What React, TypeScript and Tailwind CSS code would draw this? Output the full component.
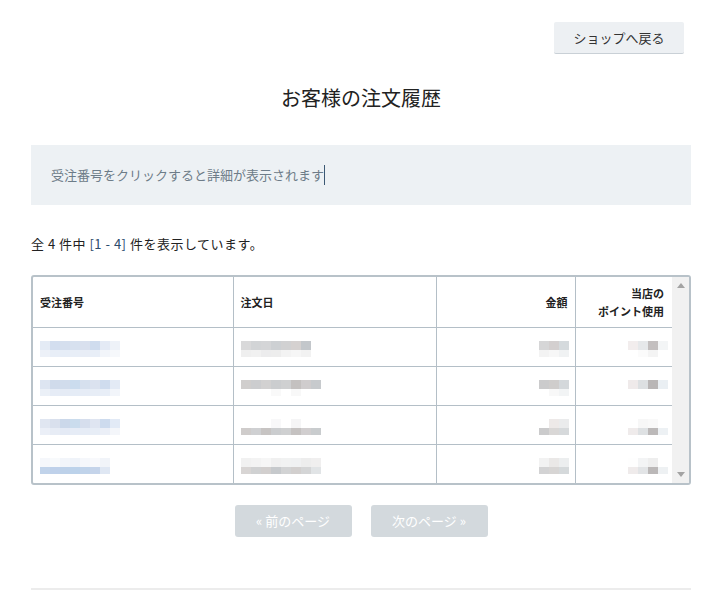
const font = { fontFamily: '"Noto Sans CJK JP", "Noto Sans", sans-serif' };

type Mosaic = { top: string[]; bottom: string[] };

const rows: { id: Mosaic; date: Mosaic; amount: Mosaic; point: Mosaic }[] = [
  {
    id: {
      top: ["#e4ebf5", "#d3deef", "#d5dfee", "#d7e1ef", "#d9e0ee", "#cfdcee", "#e4eaf5", "#eef2f8"],
      bottom: ["#edf1f8", "#e8eef7", "#e6edf7", "#e8eef7", "#e8edf6", "#e8eef7", "#f2f5fa", "#f6f8fb"],
    },
    date: {
      top: ["#d9d9da", "#d2d4d6", "#d4d5d7", "#cdd0d3", "#d1d1d2", "#d5d1d0", "#c3c7cb", "#ffffff"],
      bottom: ["#efefef", "#f1f1f1", "#ececed", "#ededed", "#f3f3f3", "#f6f6f6", "#f2f2f2", "#ffffff"],
    },
    amount: { top: ["#d6d6d7", "#d3cfcf", "#d5dadd"], bottom: ["#f3f3f3", "#f7f7f7", "#f0f2f3"] },
    point: { top: ["#f2eded", "#e6e8ea", "#c3bfbf", "#f3f5f6"], bottom: ["#ffffff", "#fbfbfb", "#f4f4f4", "#ffffff"] },
  },
  {
    id: {
      top: ["#dde5f1", "#d0dbeb", "#d1dcec", "#cbdcee", "#d6e0ee", "#dbe2ef", "#cfdcee", "#e3eaf5"],
      bottom: ["#ebf0f7", "#e6ecf6", "#e5ebf5", "#e5ecf6", "#e6ecf6", "#e7edf6", "#e8eef7", "#f2f5fa"],
    },
    date: {
      top: ["#d0cecd", "#cccdcf", "#d2d1d1", "#cbcdcf", "#cfd0d1", "#c4c1c0", "#cfcccd", "#c7cacd"],
      bottom: ["#ffffff", "#ffffff", "#ffffff", "#f9f9f9", "#ffffff", "#f8f8f8", "#ffffff", "#ffffff"],
    },
    amount: { top: ["#cbcbcc", "#cfcdcc", "#d4d8db"], bottom: ["#ffffff", "#f8f8f8", "#f2f4f5"] },
    point: { top: ["#efeaea", "#dde0e2", "#b9b6b6", "#eaeff3"], bottom: ["#ffffff", "#ffffff", "#ffffff", "#ffffff"] },
  },
  {
    id: {
      top: ["#e0e6f1", "#d9e0ed", "#cbd8ea", "#cadced", "#d6deed", "#dfe5f1", "#cddbee", "#e2eaf6"],
      bottom: ["#ebeff7", "#e7ecf5", "#e4eaf5", "#e6ecf6", "#e6ecf6", "#e7edf6", "#ebeff7", "#f4f6fa"],
    },
    date: {
      top: ["#ffffff", "#ffffff", "#ffffff", "#f8f8f9", "#ffffff", "#f5f5f6", "#ffffff", "#ffffff"],
      bottom: ["#cfcccb", "#cfd0d2", "#c7c4c3", "#cbcdcf", "#cfd0d1", "#c5c2c1", "#d1cecf", "#c9ccce"],
    },
    amount: { top: ["#ffffff", "#ede9e8", "#eaebec"], bottom: ["#cbcbcc", "#d9d7d6", "#d6d9db"] },
    point: { top: ["#ffffff", "#f7f7f7", "#f9f9f9", "#ffffff"], bottom: ["#efebeb", "#dee1e3", "#bcb9b9", "#edf1f4"] },
  },
  {
    id: {
      top: ["#f5f7fb", "#f8fafc", "#f2f5fa", "#eff3f9", "#f5f7fb", "#f8f9fc", "#f1f4f9", "#ffffff"],
      bottom: ["#c1d3ea", "#bfd1ea", "#bdd1e9", "#bcd2ea", "#c0d3ea", "#c5d4ea", "#dfe7f3", "#ffffff"],
    },
    date: {
      top: ["#f1f1f1", "#f3f3f3", "#f6f6f6", "#f0f0f0", "#f1f2f2", "#f0f1f2", "#ededed", "#f0efef"],
      bottom: ["#d8d5d4", "#d0d1d2", "#d2cfce", "#c6c9cc", "#d2d3d4", "#d2cfce", "#d4d5d6", "#e1e4e6"],
    },
    amount: { top: ["#f2f2f2", "#eae8e7", "#eceeef"], bottom: ["#d3d3d4", "#d7d5d4", "#d5d9db"] },
    point: { top: ["#fefefe", "#f3f4f5", "#eeeeee", "#ffffff"], bottom: ["#efebeb", "#e2e4e6", "#bbb8b8", "#eef1f3"] },
  },
];

function Blur({ m }: { m: Mosaic }) {
  return (
    <div className="inline-flex flex-col">
      <div className="flex">
        {m.top.map((c, i) => (
          <span key={i} className="block w-[10px] h-[9px]" style={{ backgroundColor: c }} />
        ))}
      </div>
      <div className="flex">
        {m.bottom.map((c, i) => (
          <span key={i} className="block w-[10px] h-[7px]" style={{ backgroundColor: c }} />
        ))}
      </div>
    </div>
  );
}

export default function App() {
  return (
    <div className="w-[720px] min-h-[608px] bg-white text-[#333] pl-[31px] pr-[29px]" style={font}>
      <div className="flex justify-end pt-[22px] pr-[7px]">
        <button className="w-[130px] h-[32px] bg-[#edf0f3] rounded-[2px] border-b border-[#c9d0d6] text-[13px] text-[#333]">
          ショップへ戻る
        </button>
      </div>

      <h1 className="text-center text-[20px] leading-[24px] text-[#222] mt-[32px]">お客様の注文履歴</h1>

      <div className="mt-[35px] h-[60px] bg-[#edf1f4] flex items-center pl-[20px] text-[13px] text-[#6d7c88]">
        <span>受注番号をクリックすると詳細が表示されます</span>
        <span className="inline-block w-px h-[20px] bg-[#3c5873]" />
      </div>

      <p className="mt-[29px] text-[13px] tracking-[0.5px] leading-[20px] text-[#222]">
        全 4 件中 <span className="text-[#2b4a6b]">[1 - 4]</span> 件を表示しています。
      </p>

      <div className="mt-[21px] border-2 border-[#b8c2c9] rounded-[3px] flex h-[210px] overflow-hidden">
        <table className="flex-1 border-collapse text-[11px] table-fixed">
          <colgroup>
            <col className="w-[200px]" />
            <col className="w-[203px]" />
            <col className="w-[139px]" />
            <col />
          </colgroup>
          <thead>
            <tr className="h-[50px] border-b border-[#b4bfc7] font-bold text-[#222]">
              <th className="text-left pl-[7px] font-bold">受注番号</th>
              <th className="text-left pl-[7px] font-bold border-l border-[#b4bfc7]">注文日</th>
              <th className="text-right pr-[7px] font-bold border-l border-[#b4bfc7]">金額</th>
              <th className="text-right pr-[8px] font-bold border-l border-[#b4bfc7] leading-[18px]">
                当店の
                <br />
                ポイント使用
              </th>
            </tr>
          </thead>
          <tbody>
            {rows.map((r, i) => (
              <tr key={i} className={`h-[39px] ${i < rows.length - 1 ? "border-b border-[#b4bfc7]" : ""}`}>
                <td className="pl-[7px] align-middle">
                  <Blur m={r.id} />
                </td>
                <td className="pl-[7px] border-l border-[#b4bfc7] align-middle">
                  <Blur m={r.date} />
                </td>
                <td className="pr-[6px] border-l border-[#b4bfc7] text-right align-middle">
                  <Blur m={r.amount} />
                </td>
                <td className="pr-[4px] border-l border-[#b4bfc7] text-right align-middle">
                  <Blur m={r.point} />
                </td>
              </tr>
            ))}
          </tbody>
        </table>
        <div className="w-[17px] bg-[#f1f1f1] flex flex-col justify-between items-center py-[6px]">
          <svg width="8" height="5" viewBox="0 0 8 5">
            <path d="M0 5 L4 0 L8 5 Z" fill="#a3a3a3" />
          </svg>
          <svg width="8" height="5" viewBox="0 0 8 5">
            <path d="M0 0 L4 5 L8 0 Z" fill="#a3a3a3" />
          </svg>
        </div>
      </div>

      <div className="mt-[20px] flex justify-center gap-[19px]">
        <button className="w-[117px] h-[32px] rounded-[3px] bg-[#d3d9dd] text-white text-[13px]">« 前のページ</button>
        <button className="w-[117px] h-[32px] rounded-[3px] bg-[#d3d9dd] text-white text-[13px]">次のページ »</button>
      </div>

      <hr className="mt-[51px] border-0 h-[2px] bg-[#ececec]" />
    </div>
  );
}
